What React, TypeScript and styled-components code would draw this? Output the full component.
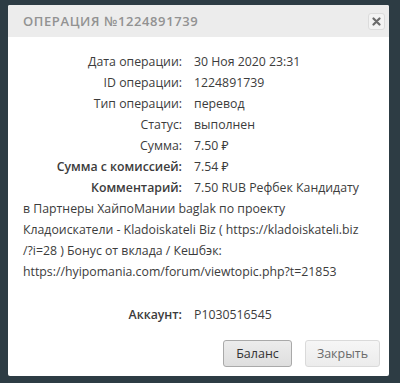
import React from "react";
import styled, { createGlobalStyle } from "styled-components";

const Global = createGlobalStyle`
  html, body { margin: 0; padding: 0; }
  body {
    background: #2d3c44;
    font-family: "Open Sans", "Noto Sans", sans-serif;
    width: 400px;
    height: 383px;
    overflow: hidden;
  }
`;

const Modal = styled.div`
  margin: 5px 11px 0 8px;
  width: 381px;
  height: 371px;
  background: #ffffff;
  border-radius: 2px;
  display: flex;
  flex-direction: column;
  overflow: hidden;
`;

const Header = styled.div`
  height: 32px;
  background: #ececec;
  display: flex;
  align-items: center;
  justify-content: space-between;
  padding: 0 4px 0 15px;
`;

const Title = styled.div`
  font-size: 13px;
  font-weight: 600;
  color: #929292;
  letter-spacing: 0.6px;
  text-transform: uppercase;
`;

const CloseBtn = styled.button`
  width: 17px;
  height: 17px;
  padding: 0;
  border: 1px solid #dcdcdc;
  border-radius: 3px;
  background: #f3f3f3;
  display: flex;
  align-items: center;
  justify-content: center;
  margin-top: 1px;
`;

const Body = styled.div`
  padding: 14px 8px 0 15px;
  font-size: 12.3px;
  line-height: 21px;
  color: #3c3c3c;
  flex: 1;
`;

const Row = styled.div`
  white-space: nowrap;
`;

const Label = styled.span<{ $bold?: boolean }>`
  display: inline-block;
  width: 159px;
  text-align: right;
  margin-right: 12px;
  font-weight: ${(p) => (p.$bold ? 600 : 400)};
`;

const Gap = styled.div`
  height: 22px;
`;

const Footer = styled.div`
  display: flex;
  justify-content: flex-end;
  gap: 13px;
  padding: 0 9px 9px 0;
`;

const Button = styled.button<{ $primary?: boolean }>`
  height: 27px;
  width: ${(p) => (p.$primary ? "69px" : "75px")};
  padding: 0;
  font-family: "Open Sans", "Noto Sans", sans-serif;
  font-size: 12.5px;
  border-radius: 3px;
  color: ${(p) => (p.$primary ? "#333" : "#6a6a6a")};
  background: ${(p) =>
    p.$primary
      ? "linear-gradient(#ececec, #dedede)"
      : "linear-gradient(#f6f6f6, #ececec)"};
  border: 1px solid ${(p) => (p.$primary ? "#a9a9a9" : "#dadada")};
`;

export default function App() {
  return (
    <>
      <Global />
      <Modal>
        <Header>
          <Title>Операция №1224891739</Title>
          <CloseBtn aria-label="close">
            <svg width="9" height="9" viewBox="0 0 9 9">
              <path d="M1.5 1.5 L7.5 7.5 M7.5 1.5 L1.5 7.5" stroke="#6b6b6b" strokeWidth="2.2" strokeLinecap="round" />
            </svg>
          </CloseBtn>
        </Header>
        <Body>
          <Row><Label>Дата операции:</Label>30 Ноя 2020 23:31</Row>
          <Row><Label>ID операции:</Label>1224891739</Row>
          <Row><Label>Тип операции:</Label>перевод</Row>
          <Row><Label>Статус:</Label>выполнен</Row>
          <Row><Label>Сумма:</Label>7.50 ₽</Row>
          <Row><Label $bold>Сумма с комиссией:</Label>7.54 ₽</Row>
          <Row>
            <Label $bold>Комментарий:</Label>7.50 RUB Рефбек Кандидату<br />
            в Партнеры ХайпоМании baglak по проекту<br />
            Кладоискатели - Kladoiskateli Biz ( https://kladoiskateli.biz<br />
            /?i=28 ) Бонус от вклада / Кешбэк:<br />
            https://hyipomania.com/forum/viewtopic.php?t=21853
          </Row>
          <Gap />
          <Row><Label $bold>Аккаунт:</Label>P1030516545</Row>
        </Body>
        <Footer>
          <Button $primary>Баланс</Button>
          <Button>Закрыть</Button>
        </Footer>
      </Modal>
    </>
  );
}
